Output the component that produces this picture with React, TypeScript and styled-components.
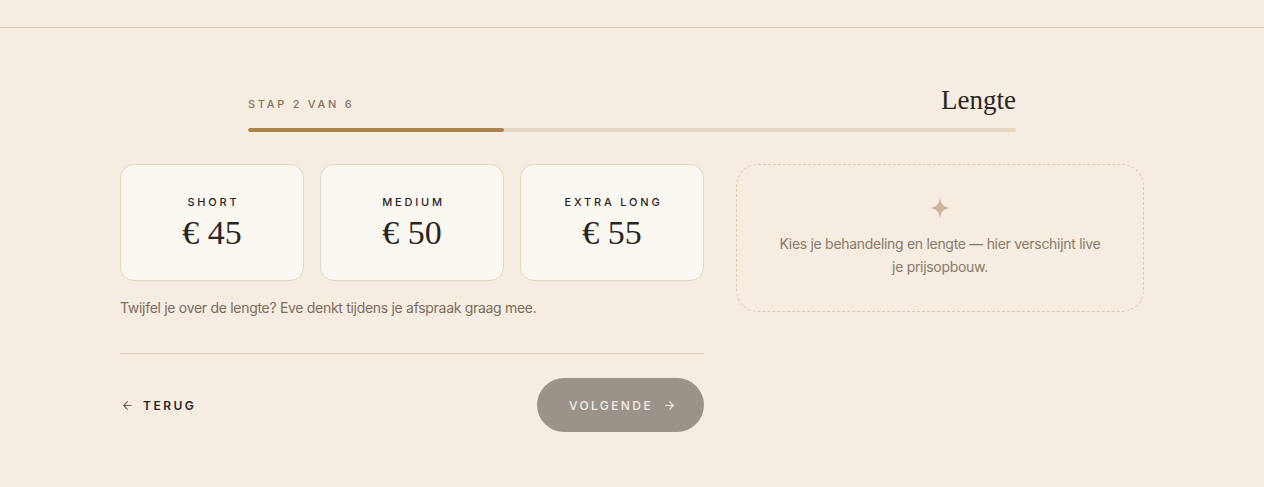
import React from "react";
import styled, { createGlobalStyle } from "styled-components";

const Global = createGlobalStyle`
  html, body { margin: 0; padding: 0; background: #f5ede2; }
  body { font-family: Inter, "Noto Sans", sans-serif; color: #2b241f; }
  * { box-sizing: border-box; }
`;

const Page = styled.div`
  min-height: 487px;
  background: #f5ede2;
`;

const TopBar = styled.header`
  height: 28px;
  border-bottom: 1px solid #dcd0bf;
`;

const Main = styled.main`
  width: 1024px;
  margin: 0 auto;
  padding-top: 58px;
`;

const Stepper = styled.div`
  width: 768px;
  margin: 0 auto;
`;

const StepRow = styled.div`
  display: flex;
  justify-content: space-between;
  align-items: flex-end;
  height: 30px;
`;

const StepLabel = styled.span`
  font-size: 11px;
  font-weight: 500;
  letter-spacing: 2.7px;
  color: #85745f;
  text-transform: uppercase;
  padding-bottom: 5px;
`;

const StepTitle = styled.h2`
  margin: 0;
  font-family: "Liberation Serif", "DejaVu Serif", serif;
  font-weight: 400;
  font-size: 27px;
  line-height: 30px;
  color: #2b241f;
  padding-bottom: 1px;
`;

const Track = styled.div`
  margin-top: 12px;
  height: 4px;
  border-radius: 2px;
  background: #e2d5c2;
  overflow: hidden;
`;

const Fill = styled.div`
  height: 100%;
  background: #a8834a;
  border-radius: 2px;
`;

const Grid = styled.div`
  display: grid;
  grid-template-columns: 584px 408px;
  gap: 32px;
  margin-top: 32px;
  align-items: start;
`;

const Left = styled.div`
  display: flex;
  flex-direction: column;
`;

const Cards = styled.div`
  display: grid;
  grid-template-columns: repeat(3, 1fr);
  gap: 16px;
`;

const Card = styled.button`
  height: 117px;
  border: 1px solid #e4d7c3;
  border-radius: 14px;
  background: #fbf8f2;
  display: flex;
  flex-direction: column;
  align-items: center;
  justify-content: center;
  gap: 4px;
  padding: 2px 0 0;
  cursor: pointer;
  font-family: inherit;
`;

const CardLabel = styled.span`
  font-size: 11px;
  font-weight: 500;
  letter-spacing: 2.8px;
  color: #2b241f;
  text-transform: uppercase;
  margin-left: 3px;
`;

const Price = styled.span`
  font-family: "Liberation Serif", "DejaVu Serif", serif;
  font-size: 34px;
  line-height: 40px;
  color: #2b241f;
`;

const Helper = styled.p`
  margin: 16px 0 0;
  font-size: 14px;
  line-height: 22px;
  color: #7d6c5b;
  letter-spacing: -0.3px;
`;

const Divider = styled.hr`
  margin: 34px 0 0;
  border: 0;
  border-top: 1px solid #ddd0be;
`;

const Actions = styled.div`
  margin-top: 24px;
  display: flex;
  justify-content: space-between;
  align-items: center;
`;

const BackButton = styled.button`
  display: flex;
  align-items: center;
  gap: 9px;
  background: none;
  border: 0;
  padding: 0 0 0 1px;
  font-family: inherit;
  font-size: 12px;
  font-weight: 600;
  letter-spacing: 2.5px;
  color: #2b241f;
  cursor: pointer;
`;

const NextButton = styled.button`
  height: 54px;
  width: 167px;
  border-radius: 27px;
  border: 0;
  background: #9b9389;
  color: #f2ede5;
  display: flex;
  align-items: center;
  justify-content: center;
  gap: 10px;
  font-family: inherit;
  font-size: 12px;
  font-weight: 500;
  letter-spacing: 2.4px;
  padding: 0 0 0 4px;
  cursor: not-allowed;
`;

const Summary = styled.aside`
  height: 148px;
  border: 1px dashed #d9ccb9;
  border-radius: 22px;
  display: flex;
  flex-direction: column;
  align-items: center;
  padding-top: 32px;
`;

const SummaryText = styled.p`
  margin: 13px 0 0;
  max-width: 326px;
  text-align: center;
  font-size: 14px;
  line-height: 23px;
  color: #8a7967;
  letter-spacing: -0.3px;
`;

const Arrow = ({ dir, color }: { dir: "left" | "right"; color: string }) => (
  <svg width="13" height="13" viewBox="0 0 24 24" fill="none" stroke={color} strokeWidth="2" strokeLinecap="round" strokeLinejoin="round">
    {dir === "left" ? (
      <>
        <path d="M19 12H5" />
        <path d="M12 19l-7-7 7-7" />
      </>
    ) : (
      <>
        <path d="M5 12h14" />
        <path d="M12 5l7 7-7 7" />
      </>
    )}
  </svg>
);

const Sparkle = () => (
  <svg width="20" height="22" viewBox="0 0 20 22">
    <path d="M10 0 C11 7 13 10 20 11 C13 12 11 15 10 22 C9 15 7 12 0 11 C7 10 9 7 10 0 Z" fill="#cbb69c" />
  </svg>
);

const options = [
  { label: "Short", price: "€ 45" },
  { label: "Medium", price: "€ 50" },
  { label: "Extra Long", price: "€ 55" },
];

export default function App() {
  const step = 2;
  const total = 6;
  return (
    <Page>
      <Global />
      <TopBar />
      <Main>
        <Stepper>
          <StepRow>
            <StepLabel>Stap {step} van {total}</StepLabel>
            <StepTitle>Lengte</StepTitle>
          </StepRow>
          <Track>
            <Fill style={{ width: `${(step / total) * 100}%` }} />
          </Track>
        </Stepper>
        <Grid>
          <Left>
            <Cards>
              {options.map((o) => (
                <Card key={o.label}>
                  <CardLabel>{o.label}</CardLabel>
                  <Price>{o.price}</Price>
                </Card>
              ))}
            </Cards>
            <Helper>Twijfel je over de lengte? Eve denkt tijdens je afspraak graag mee.</Helper>
            <Divider />
            <Actions>
              <BackButton>
                <Arrow dir="left" color="#6e6258" />
                TERUG
              </BackButton>
              <NextButton>
                VOLGENDE
                <Arrow dir="right" color="#f2ede5" />
              </NextButton>
            </Actions>
          </Left>
          <Summary>
            <Sparkle />
            <SummaryText>Kies je behandeling en lengte — hier verschijnt live je prijsopbouw.</SummaryText>
          </Summary>
        </Grid>
      </Main>
    </Page>
  );
}
